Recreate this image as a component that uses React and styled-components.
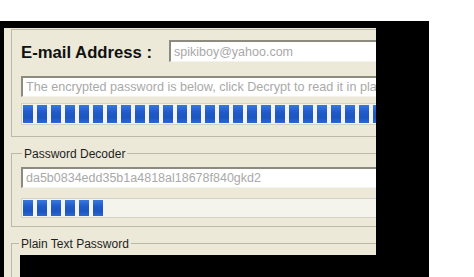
import styled, { createGlobalStyle } from 'styled-components';

const GlobalStyle = createGlobalStyle`
  html, body {
    margin: 0;
    padding: 0;
    background: #fff;
  }
  body {
    font-family: "Liberation Sans", Arial, sans-serif;
  }
`;

const Page = styled.div`
  width: 474px;
  height: 277px;
  padding-top: 21px;
  box-sizing: border-box;
  overflow: hidden;
`;

const Monitor = styled.div`
  width: 429px;
  height: 256px;
  background: #000;
  padding: 7px 0 0 4px;
  box-sizing: border-box;
`;

const Viewport = styled.div`
  width: 372px;
  height: 100%;
  overflow: hidden;
  background: #ece9d8;
`;

const Window = styled.div`
  width: 470px;
  padding-top: 1px;
  display: flex;
  flex-direction: column;
`;

const GroupBox = styled.fieldset`
  margin: ${(props) => props.$top}px 0 0 7px;
  padding: 0;
  min-width: 0;
  border: 1px solid #bcb9a6;
`;

const Legend = styled.legend`
  margin-left: ${(props) => props.$indent}px;
  padding: 2px 2px 0;
  font-size: 12px;
  line-height: 14px;
  color: #1e1e1e;
`;

const GroupBody = styled.div`
  display: flex;
  flex-direction: column;
  padding: ${(props) => props.$pad};
`;

const Row = styled.div`
  display: flex;
  align-items: flex-end;
  height: 22px;
`;

const FieldLabel = styled.span`
  flex: none;
  width: 148px;
  font-size: 16.7px;
  line-height: 19px;
  font-weight: 700;
  color: #111;
  white-space: nowrap;
`;

const TextBox = styled.div`
  flex: 1 1 auto;
  height: ${(props) => props.$h}px;
  margin-top: ${(props) => props.$mt || 0}px;
  box-sizing: border-box;
  background: #fff;
  border-style: solid;
  border-width: 2px 1px 1px 2px;
  border-color: #8d8b80 #f3f2ec #f3f2ec #8d8b80;
  padding-left: 3px;
  display: flex;
  align-items: center;
  font-size: ${(props) => props.$fs}px;
  color: #a9a9a9;
  white-space: nowrap;
  overflow: hidden;
`;

const Progress = styled.div`
  flex: none;
  display: flex;
  height: ${(props) => props.$h}px;
  margin-top: ${(props) => props.$mt}px;
  box-sizing: border-box;
  padding: 1px;
  border: 1px solid #d4d2c4;
  background: #f4f3ec;
  overflow: hidden;
`;

const Block = styled.div`
  flex: none;
  width: 10px;
  height: 100%;
  margin-right: 4px;
  background: linear-gradient(#3a78dc, #1f5bc9 40%, #1c55c0 70%, #2c68d2);
`;

const BlackArea = styled.div`
  flex: none;
  height: 60px;
  background: #000;
`;

function Blocks({ count }) {
  return Array.from({ length: count }, (_, i) => <Block key={i} />);
}

export default function App() {
  return (
    <>
      <GlobalStyle />
      <Page>
        <Monitor>
          <Viewport>
            <Window>
              <GroupBox $top={0}>
                <GroupBody $pad="10px 0 11px 9px">
                  <Row>
                    <FieldLabel>E-mail Address :</FieldLabel>
                    <TextBox $h={22} $fs={12.5}>spikiboy@yahoo.com</TextBox>
                  </Row>
                  <TextBox $h={21} $mt={14} $fs={12.6}>
                    The encrypted password is below, click Decrypt to read it in plain text
                  </TextBox>
                  <Progress $h={22} $mt={6}>
                    <Blocks count={32} />
                  </Progress>
                </GroupBody>
              </GroupBox>

              <GroupBox $top={8}>
                <Legend $indent={10}>Password Decoder</Legend>
                <GroupBody $pad="6px 0 8px 9px">
                  <TextBox $h={21} $fs={12.5}>da5b0834edd35b1a4818al18678f840gkd2</TextBox>
                  <Progress $h={20} $mt={10}>
                    <Blocks count={6} />
                  </Progress>
                </GroupBody>
              </GroupBox>

              <GroupBox $top={8}>
                <Legend $indent={7}>Plain Text Password</Legend>
                <GroupBody $pad="4px 0 0 8px">
                  <BlackArea />
                </GroupBody>
              </GroupBox>
            </Window>
          </Viewport>
        </Monitor>
      </Page>
    </>
  );
}
